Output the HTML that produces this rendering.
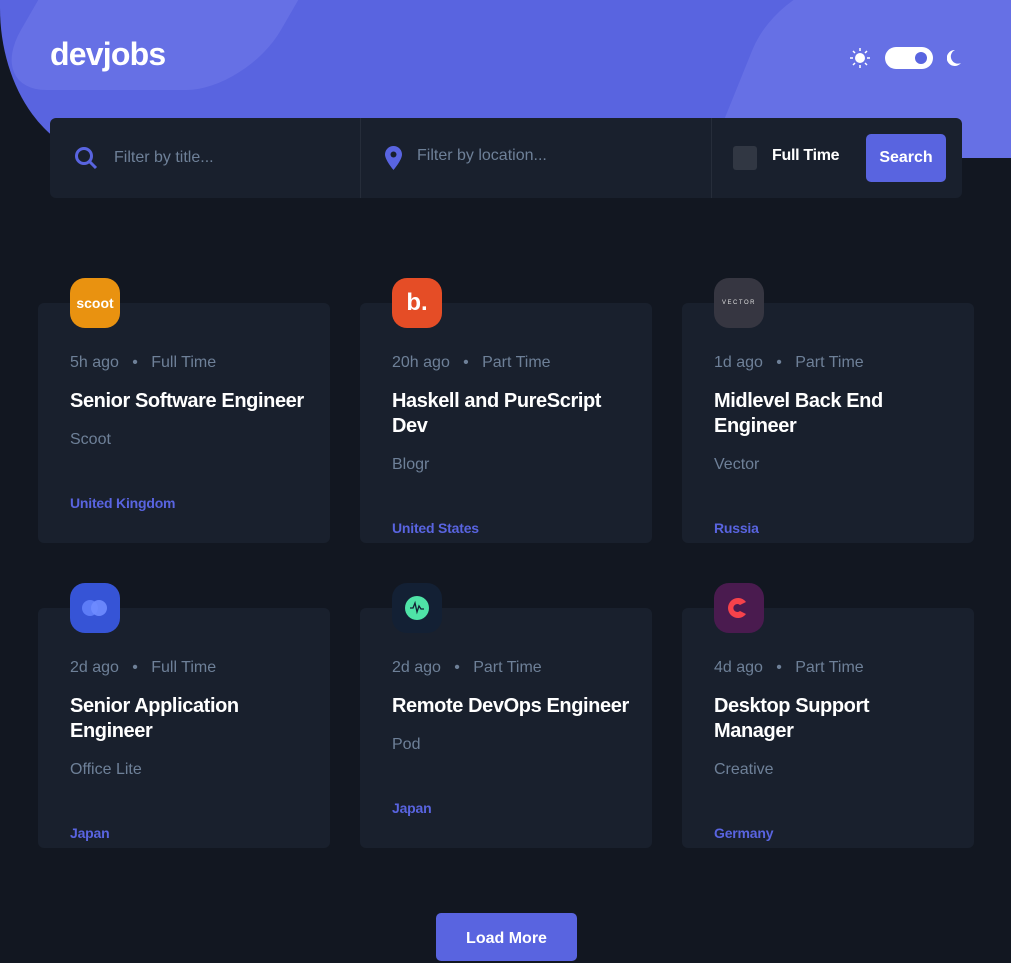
<!DOCTYPE html>
<html><head><meta charset="utf-8"><style>
*{margin:0;padding:0;box-sizing:border-box}
body{width:1011px;height:944px;overflow:hidden;background:#121721;font-family:"Liberation Sans",sans-serif;position:relative}
.hdr{position:absolute;left:0;top:0;width:1011px;height:158px;background:#5964e0;border-bottom-left-radius:110px 150px;overflow:hidden}
.s1{position:absolute;left:70px;top:-200px;width:260px;height:290px;background:#6670e5;border-radius:0 0 60px 60px;transform:skewX(-30deg)}
.s2{position:absolute;left:720px;top:-20px;width:400px;height:300px;background:#6670e5;border-radius:70px;transform:skewX(-22deg)}
.logo{position:absolute;left:50px;top:36px;color:#fff;font-size:32px;font-weight:bold;letter-spacing:-0.8px}
.tog{position:absolute;left:885px;top:47px;width:48px;height:22px;background:#fff;border-radius:11px}
.tog i{position:absolute;right:6px;top:5px;width:12px;height:12px;border-radius:50%;background:#5964e0}
.bar{position:absolute;left:50px;top:118px;width:912px;height:80px;background:#19202d;border-radius:6px}
.div{position:absolute;top:0;width:1px;height:80px;background:#262d3a}
.ph{position:absolute;color:#6e8098;font-size:16px}
.btn{position:absolute;background:#5964e0;color:#fff;font-weight:bold;font-size:16px;border-radius:5px;text-align:center}
.card{position:absolute;width:292px;height:240px;background:#19202d;border-radius:6px}
.lg{position:absolute;left:32px;top:-25px;width:50px;height:50px;border-radius:15px;display:flex;align-items:center;justify-content:center}
.meta{position:absolute;left:32px;top:51px;color:#6e8098;font-size:16px}
.t{position:absolute;left:32px;top:86px;color:#fff;font-size:20px;font-weight:bold;line-height:25px;width:244px;letter-spacing:-0.4px}
.co{position:absolute;left:32px;color:#6e8098;font-size:16px}
.loc{position:absolute;left:32px;color:#5964e0;font-size:14px;font-weight:bold;letter-spacing:-0.2px}
</style></head><body>
<div class="hdr"><div class="s1"></div><div class="s2"></div></div>
<div class="logo">devjobs</div>
<svg style="position:absolute;left:850px;top:48px" width="20" height="20" viewBox="0 0 20 20"><circle cx="10" cy="10" r="5" fill="#fff"/><g stroke="#fff" stroke-width="1.5"><path d="M10 0v3M10 17v3M0 10h3M17 10h3M3 3l2 2M15 15l2 2M3 17l2-2M15 5l2-2"/></g></svg>
<div class="tog"><i></i></div>
<svg style="position:absolute;left:947px;top:50px" width="14" height="16" viewBox="0 0 14 16"><path d="M8 0a8 8 0 1 0 6 13A6.5 6.5 0 0 1 8 0z" fill="#fff"/></svg>
<div class="bar">
<svg style="position:absolute;left:24px;top:28px" width="24" height="24" viewBox="0 0 24 24"><circle cx="10" cy="10" r="7.5" fill="none" stroke="#5964e0" stroke-width="3"/><path d="M15.5 15.5L22 22" stroke="#5964e0" stroke-width="3"/></svg>
<div class="ph" style="left:64px;top:31px">Filter by title...</div>
<div class="div" style="left:310px"></div>
<svg style="position:absolute;left:335px;top:28px" width="17" height="24" viewBox="0 0 17 24"><path d="M8.5 0A8.5 8.5 0 0 0 0 8.5C0 14 8.5 24 8.5 24S17 14 17 8.5A8.5 8.5 0 0 0 8.5 0z" fill="#5964e0"/><circle cx="8.5" cy="8.5" r="3" fill="#19202d"/></svg>
<div class="ph" style="left:367px;top:29px">Filter by location...</div>
<div class="div" style="left:661px"></div>
<div style="position:absolute;left:683px;top:28px;width:24px;height:24px;background:#313743;border-radius:3px"></div>
<div style="position:absolute;left:722px;top:29px;color:#fff;font-weight:bold;font-size:16px;letter-spacing:-0.3px">Full Time</div>
<div class="btn" style="left:816px;top:16px;width:80px;height:48px;line-height:48px">Search</div>
</div>

<div class="card" style="left:38px;top:303px"><div class="lg" style="background:#e99210;color:#fff;font-weight:bold;font-size:14px">scoot</div>
<div class="meta">5h ago &nbsp;&nbsp;•&nbsp;&nbsp; Full Time</div><div class="t">Senior Software Engineer</div><div class="co" style="top:128px">Scoot</div><div class="loc" style="top:192px">United Kingdom</div></div>
<div class="card" style="left:360px;top:303px"><div class="lg" style="background:#e54d26;color:#fff;font-weight:bold;font-size:24px">b.</div>
<div class="meta">20h ago &nbsp;&nbsp;•&nbsp;&nbsp; Part Time</div><div class="t">Haskell and PureScript Dev</div><div class="co" style="top:153px">Blogr</div><div class="loc" style="top:217px">United States</div></div>
<div class="card" style="left:682px;top:303px"><div class="lg" style="background:#363641;color:#ddd;font-size:6px;letter-spacing:1.5px">VECTOR</div>
<div class="meta">1d ago &nbsp;&nbsp;•&nbsp;&nbsp; Part Time</div><div class="t">Midlevel Back End Engineer</div><div class="co" style="top:153px">Vector</div><div class="loc" style="top:217px">Russia</div></div>

<div class="card" style="left:38px;top:608px"><div class="lg" style="background:#3654d6"><svg width="30" height="20"><circle cx="10" cy="10" r="8" fill="#5d7cf7"/><circle cx="19" cy="10" r="8" fill="#6f8cff" opacity=".9"/></svg></div>
<div class="meta">2d ago &nbsp;&nbsp;•&nbsp;&nbsp; Full Time</div><div class="t">Senior Application Engineer</div><div class="co" style="top:153px">Office Lite</div><div class="loc" style="top:217px">Japan</div></div>
<div class="card" style="left:360px;top:608px"><div class="lg" style="background:#132034"><svg width="26" height="26"><circle cx="13" cy="13" r="12" fill="#4fe3a7"/><path d="M6 13h3l2-5 2 9 2-6 2 3h3" stroke="#132034" stroke-width="1.3" fill="none"/></svg></div>
<div class="meta">2d ago &nbsp;&nbsp;•&nbsp;&nbsp; Part Time</div><div class="t">Remote DevOps Engineer</div><div class="co" style="top:128px">Pod</div><div class="loc" style="top:192px">Japan</div></div>
<div class="card" style="left:682px;top:608px"><div class="lg" style="background:#4a1b4f"><svg width="26" height="26"><path d="M20 7A10 10 0 1 0 20 19L14 16A4 4 0 1 1 14 10Z" fill="#f5424b"/></svg></div>
<div class="meta">4d ago &nbsp;&nbsp;•&nbsp;&nbsp; Part Time</div><div class="t" style="width:200px">Desktop Support Manager</div><div class="co" style="top:153px">Creative</div><div class="loc" style="top:217px">Germany</div></div>

<div class="btn" style="left:436px;top:913px;width:141px;height:48px;line-height:48px;padding-top:2px">Load More</div>
</body></html>
